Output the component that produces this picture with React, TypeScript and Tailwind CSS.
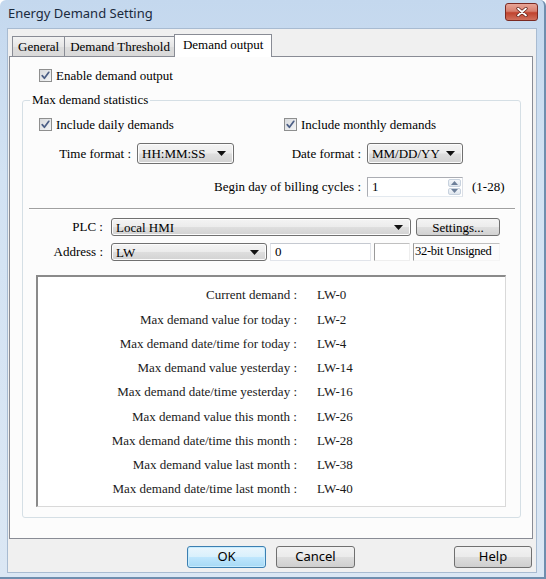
import React from "react";

const rows: [string, string][] = [
  ["Current demand :", "LW-0"],
  ["Max demand value for today :", "LW-2"],
  ["Max demand date/time for today :", "LW-4"],
  ["Max demand value yesterday :", "LW-14"],
  ["Max demand date/time yesterday :", "LW-16"],
  ["Max demand value this month :", "LW-26"],
  ["Max demand date/time this month :", "LW-28"],
  ["Max demand value last month :", "LW-38"],
  ["Max demand date/time last month :", "LW-40"],
];

const CheckBox: React.FC = () => (
  <span className="w-[13px] h-[13px] shrink-0 border border-[#8e8f8f] bg-[linear-gradient(135deg,#d8dadd,#f4f5f6)] flex items-center justify-center">
    <svg width="11" height="11" viewBox="0 0 11 11">
      <path
        d="M2.2 5.6 L4.4 8.3 L8.8 2.3"
        stroke="#4c5f86"
        strokeWidth="1.7"
        fill="none"
        strokeLinecap="round"
        strokeLinejoin="round"
      />
    </svg>
  </span>
);

const Combo: React.FC<{ value: string; className: string }> = ({
  value,
  className,
}) => (
  <div
    className={`${className} rounded-[3px] border border-[#707070] bg-[linear-gradient(#f4f4f4_0%,#ececec_48%,#dedede_52%,#d2d2d2_100%)] flex items-center pl-[4px] pr-[7px] shadow-[inset_0_0_0_1px_#fcfcfc]`}
  >
    <span className="flex-1 text-[13px] leading-none">{value}</span>
    <svg width="9" height="5" viewBox="0 0 9 5">
      <path d="M0 0 H9 L4.5 5 Z" fill="#111" />
    </svg>
  </div>
);

export default function App() {
  return (
    <div className="w-[546px] h-[579px] flex flex-col bg-[linear-gradient(#c4d8ee,#d2e2f3_30%,#dbe7f4)] border-r-2 border-b-2 border-[#6f8eae] rounded-t-[6px] overflow-hidden text-black font-['Liberation_Serif',serif]">
      {/* Title bar */}
      <div className="h-[28px] shrink-0 flex items-center pl-[8px] pr-[6px]">
        <span className="flex-1 text-[13px] text-[#1b2a3d] font-['Noto_Sans',sans-serif]">
          Energy Demand Setting
        </span>
        <div className="w-[33px] h-[18px] -mt-[4px] rounded-[3px] border border-[#7a2a22] bg-[linear-gradient(#e8a597_0%,#d7806f_45%,#c0432e_55%,#d0705c_100%)] flex items-center justify-center">
          <svg width="12" height="10" viewBox="0 0 12 10">
            <path d="M2 1.5 L10 8.5 M10 1.5 L2 8.5" stroke="#5a1d15" strokeWidth="3.2" strokeLinecap="round" />
            <path d="M2 1.5 L10 8.5 M10 1.5 L2 8.5" stroke="#ffffff" strokeWidth="1.8" strokeLinecap="round" />
          </svg>
        </div>
      </div>

      {/* Client area */}
      <div className="mx-[7px] flex flex-col bg-[#f0f0f0] border border-[#a8bbd1] pt-[5px]">
        {/* Tabs */}
        <div className="h-[22px] flex items-end pl-[4px] text-[13px]">
          <div className="h-[20px] px-[5px] flex items-center border border-b-0 border-[#898c95] bg-[linear-gradient(#f3f3f3,#e6e6e6_50%,#dcdcdc_51%,#d9d9d9)]">
            General
          </div>
          <div className="h-[20px] px-[5px] flex items-center border border-b-0 border-l-0 border-[#898c95] bg-[linear-gradient(#f3f3f3,#e6e6e6_50%,#dcdcdc_51%,#d9d9d9)]">
            Demand Threshold
          </div>
          <div className="relative z-10 h-[23px] -mb-px -ml-[2px] px-[8px] pb-[3px] flex items-center border border-b-0 border-[#898c95] bg-white">
            Demand output
          </div>
        </div>

        {/* Panel */}
        <div className="h-[483px] ml-[1px] mr-[3px] border border-[#898c95] bg-[#fcfcfc] flex flex-col">
          <div className="mt-[12px] ml-[29px] h-[13px] flex items-center gap-[4px] text-[13px]">
            <CheckBox />
            <span>Enable demand output</span>
          </div>

          <fieldset className="mt-[10px] ml-[12px] w-[499px] border border-[#d5dfe5] rounded-[3px] pb-[10px] text-[13px]">
            <legend className="ml-[7px] px-[2px] leading-[16px]">Max demand statistics</legend>

            <div className="mt-[10px] h-[13px] flex items-center">
              <div className="w-[261px] pl-[16px] flex items-center gap-[4px]">
                <CheckBox />
                <span>Include daily demands</span>
              </div>
              <div className="flex items-center gap-[4px]">
                <CheckBox />
                <span>Include monthly demands</span>
              </div>
            </div>

            <div className="mt-[12px] h-[21px] flex items-center">
              <span className="w-[108px] text-right">Time format :</span>
              <Combo value="HH:MM:SS" className="ml-[6px] w-[97px] h-[21px]" />
              <span className="w-[127px] text-right">Date format :</span>
              <Combo value="MM/DD/YY" className="ml-[6px] w-[96px] h-[21px]" />
            </div>

            <div className="mt-[13px] h-[20px] flex items-center">
              <span className="w-[338px] text-right">Begin day of billing cycles :</span>
              <div className="ml-[6px] w-[96px] h-[20px] bg-white border border-[#abadb3] border-b-[#e3e9ef] border-r-[#dbdfe6] flex">
                <span className="flex-1 pl-[4px] leading-[18px]">1</span>
                <div className="w-[15px] flex flex-col gap-px p-px">
                  <div className="flex-1 flex items-center justify-center rounded-[2px] border border-[#c8d2de] bg-[linear-gradient(#f3f6fa,#dfe6ee)]">
                    <svg width="7" height="4" viewBox="0 0 7 4">
                      <path d="M0 4 L3.5 0 L7 4 Z" fill="#6d7f99" />
                    </svg>
                  </div>
                  <div className="flex-1 flex items-center justify-center rounded-[2px] border border-[#c8d2de] bg-[linear-gradient(#f3f6fa,#dfe6ee)]">
                    <svg width="7" height="4" viewBox="0 0 7 4">
                      <path d="M0 0 L7 0 L3.5 4 Z" fill="#6d7f99" />
                    </svg>
                  </div>
                </div>
              </div>
              <span className="ml-[9px]">(1-28)</span>
            </div>

            <div className="mt-[11px] ml-[6px] w-[486px] border-t border-[#a0a0a0] border-b border-b-white" />

            <div className="mt-[8px] h-[18px] flex items-center">
              <span className="w-[80px] text-right">PLC :</span>
              <Combo value="Local HMI" className="ml-[8px] w-[300px] h-[18px]" />
              <div className="ml-[5px] w-[84px] h-[18px] rounded-[3px] border border-[#707070] bg-[linear-gradient(#f4f4f4_0%,#ececec_48%,#dedede_52%,#d2d2d2_100%)] flex items-center justify-center leading-none">
                Settings...
              </div>
            </div>

            <div className="mt-[7px] h-[18px] flex items-center">
              <span className="w-[80px] text-right">Address :</span>
              <Combo value="LW" className="ml-[8px] w-[156px] h-[18px]" />
              <div className="ml-[3px] w-[101px] h-[18px] bg-white border border-[#e1e4ea] border-t-[#c5c9d0] pl-[4px] leading-[16px]">
                0
              </div>
              <div className="ml-[3px] w-[36px] h-[18px] bg-white border border-[#eeeeee] border-l-[#9a9a9a] border-t-[#c0c0c0]" />
              <div className="ml-[3px] w-[87px] h-[18px] border border-[#f5f5f5] border-l-[#9a9a9a] border-t-[#c0c0c0] pl-[1px] leading-[15px] whitespace-nowrap overflow-hidden text-[12.5px] tracking-[-0.3px]">
                32-bit Unsigned
              </div>
            </div>

            <div className="mt-[14px] ml-[13px] w-[470px] h-[232px] bg-white border-t-2 border-l-2 border-t-[#8a8a8a] border-l-[#8a8a8a] border-r border-b border-r-[#d9d9d9] border-b-[#d9d9d9] pt-[6px] flex flex-col text-[#1a1a1a]">
              {rows.map(([label, value]) => (
                <div key={label} className="h-[24.25px] flex items-center">
                  <span className="w-[259px] text-right">{label}</span>
                  <span className="ml-[20px]">{value}</span>
                </div>
              ))}
            </div>
          </fieldset>
        </div>

        {/* Buttons */}
        <div className="mt-[7px] mb-[4px] h-[22px] flex text-[13px] font-['Noto_Sans',sans-serif]">
          <div className="ml-[179px] w-[79px] h-[22px] rounded-[3px] border border-[#3c7fb1] bg-[linear-gradient(#eaf6fd_0%,#d9f0fc_48%,#bee6fd_52%,#a7d9f5_100%)] shadow-[inset_0_0_0_1px_#c7ecfe] flex items-center justify-center">
            OK
          </div>
          <div className="ml-[10px] w-[79px] h-[22px] rounded-[3px] border border-[#707070] bg-[linear-gradient(#f2f2f2_0%,#ebebeb_48%,#dddddd_52%,#cfcfcf_100%)] flex items-center justify-center">
            Cancel
          </div>
          <div className="ml-[99px] w-[78px] h-[22px] rounded-[3px] border border-[#707070] bg-[linear-gradient(#f2f2f2_0%,#ebebeb_48%,#dddddd_52%,#cfcfcf_100%)] flex items-center justify-center">
            Help
          </div>
        </div>
      </div>
    </div>
  );
}
